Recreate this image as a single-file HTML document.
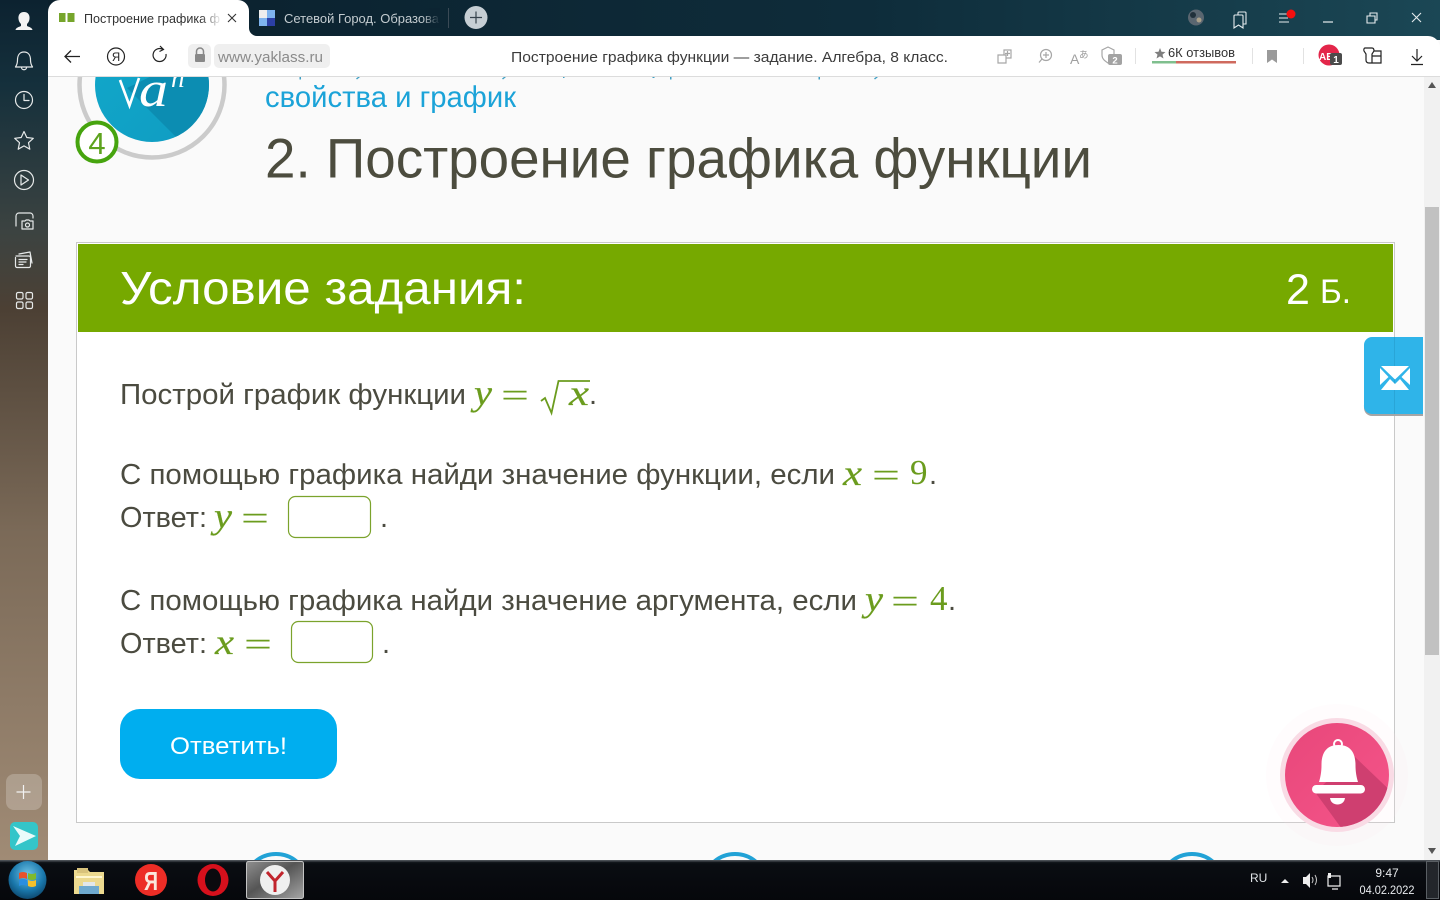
<!DOCTYPE html>
<html lang="ru"><head><meta charset="utf-8"><title>Построение графика функции</title>
<style>
html,body{margin:0;padding:0;width:1440px;height:900px;overflow:hidden;background:#fafafa}
svg{display:block;position:absolute;left:0;top:0}
text{font-family:"Liberation Sans","DejaVu Sans",sans-serif}
.t{fill:#4b4b40;font-size:29px}
.m{font-family:"Liberation Serif",serif;font-style:italic;fill:#6b9c1e;font-size:36px;font-weight:400;stroke:#6b9c1e;stroke-width:.2}
.n{font-family:"Liberation Serif",serif;fill:#6b9c1e;font-size:35px}
.ic{fill:none;stroke:#e6e9e9;stroke-width:1.2;stroke-linecap:round;stroke-linejoin:round}
.g{fill:none;stroke:#a6a6a6;stroke-width:1.2}
</style></head><body>
<svg width="1440" height="900" viewBox="0 0 1440 900" xmlns="http://www.w3.org/2000/svg">
<defs>
<linearGradient id="side" x1="0" y1="0" x2="0" y2="1"><stop offset="0" stop-color="#0c2230"/><stop offset=".1" stop-color="#15303c"/><stop offset=".27" stop-color="#3c4341"/><stop offset=".36" stop-color="#4c4034"/><stop offset=".62" stop-color="#7b6a58"/><stop offset="1" stop-color="#a08b75"/></linearGradient>
<linearGradient id="top" x1="0" y1="0" x2="1" y2="0"><stop offset="0" stop-color="#0b1f2c"/><stop offset=".6" stop-color="#0e2c3a"/><stop offset="1" stop-color="#1b4755"/></linearGradient>
<linearGradient id="task" x1="0" y1="0" x2="0" y2="1"><stop offset="0" stop-color="#20242a"/><stop offset=".1" stop-color="#0a0d12"/><stop offset="1" stop-color="#06070b"/></linearGradient>
<linearGradient id="teal" x1="0" y1="0" x2="1" y2="1"><stop offset="0" stop-color="#12a8ca"/><stop offset="1" stop-color="#0f9cc2"/></linearGradient>
<linearGradient id="pink" x1="0" y1="0" x2="1" y2="1"><stop offset="0" stop-color="#e8477a"/><stop offset="1" stop-color="#f5558a"/></linearGradient>
<linearGradient id="ytab" x1="0" y1="0" x2="1" y2="1"><stop offset="0" stop-color="#8f8f8f"/><stop offset=".45" stop-color="#555"/><stop offset="1" stop-color="#a5a5a5"/></linearGradient>
<radialGradient id="orb" cx=".5" cy=".35" r=".7"><stop offset="0" stop-color="#6fc3e6"/><stop offset=".6" stop-color="#1a78ac"/><stop offset="1" stop-color="#0b3f63"/></radialGradient>
<clipPath id="vp"><rect x="48" y="77" width="1376" height="783"/></clipPath>
<clipPath id="tc"><circle cx="152" cy="85" r="57"/></clipPath>
<clipPath id="pc"><circle cx="1337" cy="775" r="52"/></clipPath>
<linearGradient id="fade1" x1="0" x2="1"><stop offset="0" stop-color="#fff" stop-opacity="0"/><stop offset="1" stop-color="#fff"/></linearGradient>
<linearGradient id="fade2" x1="0" x2="1"><stop offset="0" stop-color="#0c2432" stop-opacity="0"/><stop offset="1" stop-color="#0c2432"/></linearGradient>
</defs>

<!-- page -->
<rect x="48" y="76" width="1376" height="784" fill="#fafafa"/>
<g clip-path="url(#vp)">
  <circle cx="152" cy="85" r="72.5" fill="none" stroke="#cbcbcb" stroke-width="4.5"/>
  <circle cx="152" cy="85" r="57" fill="url(#teal)"/>
  <g clip-path="url(#tc)"><path d="M127 88 L184 145 L215 145 L215 60 L185 60 Z" fill="#0c8db2"/></g>
  <path d="M120 80 L129.500 105.500 L139 78" fill="none" stroke="#fff" stroke-width="2.600"/>
  <text x="139" y="106" font-size="50" style="font-family:'Liberation Serif',serif;font-style:italic;fill:#fff" textLength="29" lengthAdjust="spacingAndGlyphs">a</text>
  <text x="171" y="87" font-size="27" style="font-family:'Liberation Serif',serif;font-style:italic;fill:#fff">n</text>
  <circle cx="97" cy="142" r="19.500" fill="#fff" stroke="#46a40e" stroke-width="4"/>
  <text x="97" y="154" text-anchor="middle" font-size="31" fill="#5da31d">4</text>
  <text x="265" y="107" font-size="30" fill="#1ba3d8" textLength="251" lengthAdjust="spacingAndGlyphs">свойства и график</text>
  <g fill="#3f9fc4"><rect x="299.500" y="77" width="1.500" height="2.500"/><path d="M357 79.500 l3 -2.500 h-2 l-2 1.500 Z"/><path d="M503 79.500 l3 -2.500 h-2 l-2 1.500 Z"/><rect x="563" y="77" width="1.500" height="1"/><rect x="652.500" y="77" width="2" height="1"/><rect x="670" y="77" width="1.500" height="2.500"/><rect x="818.500" y="77" width="1.500" height="2.500"/><path d="M875 79.500 l3 -2.500 h-2 l-2 1.500 Z"/></g>
  <text x="265" y="177.500" font-size="56" fill="#4c4c3e" textLength="827" lengthAdjust="spacingAndGlyphs">2. Построение графика функции</text>

  <rect x="76.500" y="242.500" width="1318" height="580" fill="#fff" stroke="#c9c9c9"/>
  <rect x="78" y="244" width="1315" height="88" fill="#76a900"/>
  <text x="120" y="304" font-size="46" fill="#fff" textLength="406" lengthAdjust="spacingAndGlyphs">Условие задания:</text>
  <text x="1286" y="304" font-size="43" fill="#fff">2</text>
  <text x="1320" y="303" font-size="34" fill="#fff" textLength="31" lengthAdjust="spacingAndGlyphs">Б.</text>

  <text class="t" x="120" y="404" textLength="346" lengthAdjust="spacingAndGlyphs">Построй график функции</text>
  <text class="m" x="474" y="405" textLength="18" lengthAdjust="spacingAndGlyphs">y</text>
  <text class="n" x="501" y="407" textLength="28" lengthAdjust="spacingAndGlyphs">=</text>
  <path d="M541 401 L545 398 L551.500 413 L558.500 381 L590 381" fill="none" stroke="#6b9c1e" stroke-width="1.800"/>
  <text class="m" x="569" y="405" textLength="20" lengthAdjust="spacingAndGlyphs">x</text>
  <text class="t" x="589" y="404">.</text>

  <text class="t" x="120" y="484" textLength="715" lengthAdjust="spacingAndGlyphs">С помощью графика найди значение функции, если</text>
  <text class="m" x="843" y="485" textLength="19" lengthAdjust="spacingAndGlyphs">x</text>
  <text class="n" x="872" y="487" textLength="28" lengthAdjust="spacingAndGlyphs">=</text>
  <text class="n" x="910" y="484">9</text>
  <text class="t" x="929" y="484">.</text>

  <text class="t" x="120" y="527" textLength="87" lengthAdjust="spacingAndGlyphs">Ответ:</text>
  <text class="m" x="214" y="528" textLength="18" lengthAdjust="spacingAndGlyphs">y</text>
  <text class="n" x="241" y="530" textLength="28" lengthAdjust="spacingAndGlyphs">=</text>
  <rect x="288.500" y="496.500" width="82" height="41" rx="7" fill="#fff" stroke="#7ba32c" stroke-width="1.200"/>
  <text class="t" x="380" y="527">.</text>

  <text class="t" x="120" y="610" textLength="737" lengthAdjust="spacingAndGlyphs">С помощью графика найди значение аргумента, если</text>
  <text class="m" x="865" y="611" textLength="18" lengthAdjust="spacingAndGlyphs">y</text>
  <text class="n" x="891" y="613" textLength="28" lengthAdjust="spacingAndGlyphs">=</text>
  <text class="n" x="930" y="610">4</text>
  <text class="t" x="948" y="610">.</text>

  <text class="t" x="120" y="653" textLength="87" lengthAdjust="spacingAndGlyphs">Ответ:</text>
  <text class="m" x="215" y="654" textLength="19" lengthAdjust="spacingAndGlyphs">x</text>
  <text class="n" x="244" y="656" textLength="28" lengthAdjust="spacingAndGlyphs">=</text>
  <rect x="291.500" y="621.500" width="81" height="41" rx="7" fill="#fff" stroke="#7ba32c" stroke-width="1.200"/>
  <text class="t" x="382" y="653">.</text>

  <rect x="120" y="709" width="217" height="70" rx="20" fill="#00aeef"/>
  <text x="170" y="754" font-size="24" fill="#fff" textLength="117" lengthAdjust="spacingAndGlyphs">Ответить!</text>

  <!-- mail -->
  <path d="M1423 339 H1372 a8 8 0 0 0 -8 8 V408 a8 8 0 0 0 8 8 H1423 Z" fill="#a5a5a5"/>
  <path d="M1423 337 H1372 a8 8 0 0 0 -8 8 V405 a8 8 0 0 0 8 9 H1423 Z" fill="#2fb4e9"/>
  <rect x="1394" y="337" width="1" height="77" fill="#29a5d7"/>
  <g fill="#fff"><path d="M1381 366 H1409 L1395 379.500 Z"/><path d="M1380 368 L1388.500 377 L1380 385 Z"/><path d="M1410 368 L1401.500 377 L1410 385 Z"/><path d="M1381 390 L1390 379 L1395 384 L1400 379 L1409 390 Z"/></g>

  <!-- bell -->
  <circle cx="1337" cy="775" r="71" fill="#fbe9ef" opacity=".12"/>
  <circle cx="1337" cy="775" r="57" fill="#f9dbe5"/>
  <circle cx="1337" cy="775" r="52" fill="url(#pink)"/>
  <g clip-path="url(#pc)"><path d="M1355 757 L1400 800 L1350 840 L1315 792 Z" fill="#cf3f70"/></g>
  <g fill="#fff">
    <path d="M1338.500 745 c-13 0 -17 9 -17 20 c0 7 -1 12 -2.500 17 h39 c-1.500 -5 -2.500 -10 -2.500 -17 c0 -11 -4 -20 -17 -20 Z"/>
    <rect x="1312" y="785" width="53" height="8.500" rx="4.200"/>
    <path d="M1330 798 h15 c-.5 4 -3.500 6.500 -7.500 6.500 s-7 -2.500 -7.500 -6.500 Z"/>
  </g>
  <circle cx="1338" cy="744" r="4" fill="none" stroke="#fff" stroke-width="2"/>

  <g fill="none" stroke="#21a2d6" stroke-width="4">
    <circle cx="276" cy="886" r="32"/><circle cx="735" cy="886" r="32"/><circle cx="1192" cy="886" r="32"/>
  </g>
</g>

<!-- scrollbar -->
<rect x="1424" y="76" width="16" height="784" fill="#f1f1f1"/>
<rect x="1425" y="207" width="14" height="448" fill="#c1c1c1"/>
<path d="M1432 82 L1436 88 H1428 Z" fill="#555"/>
<path d="M1428 848 H1436 L1432 854 Z" fill="#555"/>

<!-- top bar -->
<rect x="0" y="0" width="1440" height="40" fill="url(#top)"/>
<rect x="0" y="0" width="48" height="860" fill="url(#side)"/>
<!-- toolbar -->
<path d="M48 36 H1428 a12 12 0 0 1 12 12 V76 H48 Z" fill="#fff"/>
<rect x="48" y="76" width="1392" height="1" fill="#dcdcdc"/>
<!-- active tab -->
<path d="M48 40 V12 a12 12 0 0 1 12 -12 H238 a11 11 0 0 1 11 11 V28 a8 8 0 0 0 8 8 H48 Z" fill="#fff"/>
<path d="M59 13 h6.500 v9 h-6.500 Z M67.500 13 h7 v9 h-7 Z" fill="#76a52b"/>
<text x="84" y="23" font-size="12.500" fill="#333" textLength="136" lengthAdjust="spacingAndGlyphs">Построение графика ф</text>
<rect x="200" y="8" width="22" height="20" fill="url(#fade1)"/>
<path d="M228 14 L236 22 M236 14 L228 22" stroke="#333" stroke-width="1.100"/>
<!-- tab 2 -->
<rect x="259" y="10" width="16" height="16" fill="#fff"/>
<rect x="259" y="10" width="8" height="8" fill="#eee"/><rect x="267" y="10" width="8" height="8" fill="#7eb3ee"/><rect x="259" y="18" width="8" height="8" fill="#7eb3ee"/><rect x="267" y="18" width="8" height="8" fill="#2c3fa5"/>
<text x="284" y="23" font-size="12.500" fill="#c4ccd0" textLength="155" lengthAdjust="spacingAndGlyphs">Сетевой Город. Образова</text>
<rect x="422" y="8" width="18" height="20" fill="url(#fade2)"/>
<rect x="448" y="8" width="1" height="20" fill="#3a4a55"/>
<circle cx="476" cy="17.500" r="11.500" fill="#c6ced4"/>
<path d="M470 17.500 H482 M476 11.500 V23.500" stroke="#36434d" stroke-width="1.200"/>

<!-- window controls -->
<circle cx="1196" cy="17.500" r="8" fill="#5a6670"/><circle cx="1193" cy="15" r="3" fill="#20303a"/><circle cx="1199" cy="20" r="2.500" fill="#aaa08a"/>
<path d="M1235 15 h7 a1 1 0 0 1 1 1 v12 l-4.500 -3 -4.500 3 v-12 a1 1 0 0 1 1 -1 Z M1238 15 v-2 a1 1 0 0 1 1 -1 h6 a1 1 0 0 1 1 1 v11 h-3" fill="none" stroke="#e6ecee" stroke-width="1.100"/>
<path d="M1279 14 h9 M1279 18 h9 M1279 22 h10" stroke="#e6ecee" stroke-width="1.100"/>
<circle cx="1291" cy="14" r="4.500" fill="#f50f0f"/>
<path d="M1323 22 H1333" stroke="#e6ecee" stroke-width="1.200"/>
<path d="M1367 16 h8 v7 h-8 Z M1370 16 v-3 h7 v7 h-2" fill="none" stroke="#e6ecee" stroke-width="1.100"/>
<path d="M1412 13 L1421 22 M1421 13 L1412 22" stroke="#e6ecee" stroke-width="1.100"/>

<!-- toolbar left -->
<path d="M80 56.500 H65 M71 50.500 L65 56.500 L71 62.500" fill="none" stroke="#222" stroke-width="1.300"/>
<circle cx="116" cy="56.500" r="8.500" fill="none" stroke="#222" stroke-width="1.200"/>
<text x="116" y="61" text-anchor="middle" font-size="11.500" fill="#222">Я</text>
<path d="M166 54 a6.500 6.500 0 1 1 -3 -4.500 M160 46 l3.500 3.500 -4 2" fill="none" stroke="#222" stroke-width="1.200"/>
<rect x="188" y="44" width="23" height="24" rx="5" fill="#efefef"/>
<path d="M196.500 54 v-2.500 a3.500 3.500 0 0 1 7 0 V54" fill="none" stroke="#888" stroke-width="1.500"/><rect x="195" y="54" width="10" height="8" rx="1" fill="#888"/>
<rect x="214" y="44" width="116" height="24" rx="5" fill="#efefef"/>
<text x="218" y="62" font-size="15" fill="#8a8a8a" textLength="105" lengthAdjust="spacingAndGlyphs">www.yaklass.ru</text>
<text x="511" y="62" font-size="15" fill="#3c3c3c" textLength="437" lengthAdjust="spacingAndGlyphs">Построение графика функции — задание. Алгебра, 8 класс.</text>

<!-- toolbar right -->
<path class="g" d="M998 55 h6 v-5 h7 v8 h-5 v5 h-8 Z M1004 55 h2 v3 M1007.500 51 v5 M1005 53.500 h5"/>
<circle class="g" cx="1046" cy="55" r="5.500"/><path class="g" d="M1042 59 L1039 62.500 M1046 52 v6 M1043 55 h6"/>
<text x="1070" y="64" font-size="14" fill="#a0a0a0">A</text><text x="1079" y="58" font-size="9.500" style="font-family:'Noto Sans CJK JP',sans-serif" fill="#999">あ</text>
<path class="g" d="M1108 47 l6 3 v5 c0 4 -3 6 -6 8 c-3 -2 -6 -4 -6 -8 v-5 Z"/>
<rect x="1108" y="54" width="14" height="11" rx="2" fill="#a3a3a3"/><text x="1115" y="63.500" text-anchor="middle" font-size="9.500" font-weight="bold" fill="#fff">2</text>
<rect x="1135" y="48" width="1" height="16" fill="#e2e2e2"/>
<path d="M1160 48 l1.500 3.700 4 .3 -3 2.600 1 3.900 -3.500 -2.100 -3.500 2.100 1 -3.900 -3 -2.600 4 -.3 Z" fill="#7f7f7f"/>
<text x="1168" y="57" font-size="12.500" fill="#333" textLength="67" lengthAdjust="spacingAndGlyphs">6К отзывов</text>
<rect x="1152" y="61" width="24" height="2.500" fill="#7fbf8e"/><rect x="1176" y="61" width="60" height="2.500" fill="#cf6a5e"/>
<rect x="1252" y="48" width="1" height="16" fill="#e2e2e2"/>
<path d="M1267 50 h10 v13 l-5 -3.500 -5 3.500 Z" fill="#9a9a9a"/>
<rect x="1303" y="48" width="1" height="16" fill="#e2e2e2"/>
<circle cx="1329" cy="55" r="10.500" fill="#e3264a"/>
<text x="1319" y="60" font-size="10" font-weight="bold" fill="#fff">AE</text>
<rect x="1330" y="53" width="12" height="12" rx="2" fill="#4b4b4b"/><text x="1336" y="63" text-anchor="middle" font-size="10" font-weight="bold" fill="#fff">1</text>
<path d="M1365 48 h7 c2 0 2 2 2 3 l-2 3 v9 h-3 c-2 0 -3 -1 -3 -3 v-6 l-2 -3 c-.5 -1 0 -3 1 -3 Z M1374 51 h7 v12 h-9 M1372 56 h9" fill="none" stroke="#222" stroke-width="1.200"/>
<path d="M1417 49 V61 M1412 56 L1417 61 L1422 56 M1411 64.500 H1423" fill="none" stroke="#222" stroke-width="1.200"/>

<!-- sidebar -->
<path d="M24 12 c-4 0 -6 3 -5.500 7 c.3 2.500 1.500 4 2.500 5 v2 c-2 1 -5 1.500 -5.500 4 h17 c-.5 -2.500 -3.500 -3 -5.500 -4 v-2 c1 -1 2.200 -2.500 2.500 -5 c.5 -4 -1.500 -7 -5.500 -7 Z" fill="#f3f3f3"/>
<path class="ic" d="M24 52 c-4.500 0 -6.500 3.500 -6.500 8 c0 4 -1 5.500 -2 7 h17 c-1 -1.500 -2 -3 -2 -7 c0 -4.500 -2 -8 -6.500 -8 Z M21.500 67.500 c0 3 5 3 5 0"/>
<circle class="ic" cx="24" cy="100" r="8.500"/><path class="ic" d="M24 94.500 V100.500 H29"/>
<path class="ic" d="M24 131.500 l2.800 6 6.500 .8 -4.800 4.400 1.300 6.500 -5.800 -3.300 -5.800 3.300 1.300 -6.500 -4.800 -4.400 6.500 -.8 Z"/>
<circle class="ic" cx="24" cy="180" r="9.500"/><path class="ic" d="M21 175 V185 L28.500 180 Z"/>
<path class="ic" d="M16 226 V216 a3 3 0 0 1 3 -3 H30 a3 3 0 0 1 3 3 V218 M22 229 H33 V221 H30 L29 220 H26 L25 221 H22 Z"/><circle class="ic" cx="27.500" cy="225" r="2"/>
<path class="ic" d="M16 256 h13 a1.500 1.500 0 0 1 1.500 1.500 V266 a1.500 1.500 0 0 1 -1.500 1.500 H17 a1.500 1.500 0 0 1 -1.500 -1.500 V257.500 M19 254 L30 252 L32 263 M19 259.500 H27 M19 262 H26 M19 264.500 H23"/>
<g class="ic"><rect x="16.500" y="292.500" width="6.500" height="6.500" rx="1.500"/><rect x="26" y="292.500" width="6.500" height="6.500" rx="1.500"/><rect x="16.500" y="302" width="6.500" height="6.500" rx="1.500"/><rect x="26" y="302" width="6.500" height="6.500" rx="1.500"/></g>
<rect x="6" y="774" width="36" height="36" rx="8" fill="#fff" opacity=".22"/>
<path d="M23.500 785 V799 M16.500 792 H30.500" stroke="#f2f2f2" stroke-width="1.200"/>
<rect x="10" y="822" width="28" height="28" rx="5" fill="#34c5c9"/>
<path d="M13 826 L36 836 L15 846 L20 836 Z" fill="#e9fbfa"/>

<!-- taskbar -->
<rect x="0" y="860" width="1440" height="40" fill="url(#task)"/>
<rect x="0" y="860" width="1440" height="1.500" fill="#4a4f55"/>
<circle cx="27.500" cy="880" r="19" fill="url(#orb)"/>
<path d="M19 873 q4 -2 8 0 v6 q-4 -2 -8 0 Z" fill="#e8522c"/><path d="M28 873 q4 2 8 0 v6 q-4 2 -8 0 Z" fill="#7fba2c"/><path d="M19 880 q4 -2 8 0 v6 q-4 -2 -8 0 Z" fill="#2a8ee0"/><path d="M28 880 q4 2 8 0 v6 q-4 2 -8 0 Z" fill="#f5c02a"/>
<path d="M74 870 h14 l2 2 h14 v22 h-30 Z" fill="#ecd98f"/><rect x="77" y="868" width="11" height="5" fill="#d8c27c"/>
<path d="M79 886 h20 v8 h-20 Z" fill="#6fa9cf"/><path d="M83 882 h12 v4 h-12 Z" fill="#e3e7ea"/><rect x="76" y="876" width="26" height="2" fill="#fff7d0"/>
<circle cx="151" cy="880" r="16" fill="#ed2d26"/>
<text x="151" y="890" text-anchor="middle" font-size="26" font-weight="bold" fill="#fbe7dd" textLength="14" lengthAdjust="spacingAndGlyphs">Я</text>
<ellipse cx="213" cy="880" rx="15.500" ry="16" fill="#d6101c"/><ellipse cx="213" cy="880" rx="8" ry="11.500" fill="#0a0a0e"/>
<rect x="246.500" y="861.500" width="57" height="37" rx="2" fill="url(#ytab)" stroke="#c4c4c4"/>
<circle cx="275" cy="880" r="15" fill="#efefef"/>
<path d="M267 872 L275 881 L283 872 M275 881 V892" fill="none" stroke="#c1242c" stroke-width="3"/>
<text x="1250" y="882" font-size="12" fill="#dfe3e6">RU</text>
<path d="M1285 879 L1289 883 H1281 Z" fill="#eee"/>
<path d="M1303 877 h3 l4 -4 v15 l-4 -4 h-3 Z" fill="#eee"/><path d="M1312 877 q2 3 0 6 M1315 875 q3 5 0 10" fill="none" stroke="#ccc" stroke-width="1"/>
<path d="M1328 876 h12 v10 h-12 Z M1332 889 h6" fill="none" stroke="#eee" stroke-width="1.200"/><path d="M1328 876 v-3 h3 v5 h-3 Z" fill="#eee"/>
<text x="1387" y="877" text-anchor="middle" font-size="12" fill="#e8ebee">9:47</text>
<text x="1387" y="894" text-anchor="middle" font-size="12" fill="#e8ebee" textLength="55" lengthAdjust="spacingAndGlyphs">04.02.2022</text>
<rect x="1426.500" y="861.500" width="12" height="37" fill="#23262b" stroke="#5a5f64"/>
</svg>
</body></html>
